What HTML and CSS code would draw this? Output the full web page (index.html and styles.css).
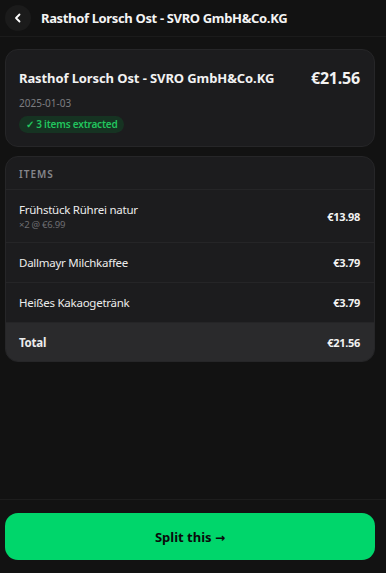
FILE: index.html
```html
<!DOCTYPE html>
<html lang="de">
<head>
  <meta charset="UTF-8">
  <meta name="viewport" content="width=device-width, initial-scale=1.0">
  <title>Receipt</title>
  <link rel="stylesheet" href="styles.css">
</head>
<body>
  <div class="app">
    <div class="topbar">
      <div class="back-btn">
        <svg width="12" height="12" viewBox="0 0 12 12"><path d="M7.5 2.5 L4 6 L7.5 9.5" fill="none" stroke="#fff" stroke-width="1.8" stroke-linecap="round" stroke-linejoin="round"/></svg>
      </div>
      <div class="topbar-title">Rasthof Lorsch Ost - SVRO GmbH&amp;Co.KG</div>
    </div>

    <div class="content">
      <div class="card summary">
        <div class="summary-head">
          <div class="merchant">Rasthof Lorsch Ost - SVRO GmbH&amp;Co.KG</div>
          <div class="amount">€21.56</div>
        </div>
        <div class="date">2025-01-03</div>
        <span class="badge">✓ 3 items extracted</span>
      </div>

      <div class="card items">
        <div class="items-label">ITEMS</div>
        <div class="row tall">
          <div>
            <div class="name">Frühstück Rührei natur</div>
            <div class="sub">×2 @ €6.99</div>
          </div>
          <div class="price">€13.98</div>
        </div>
        <div class="row">
          <div class="name">Dallmayr Milchkaffee</div>
          <div class="price">€3.79</div>
        </div>
        <div class="row">
          <div class="name">Heißes Kakaogetränk</div>
          <div class="price">€3.79</div>
        </div>
        <div class="row total">
          <div class="name">Total</div>
          <div class="price">€21.56</div>
        </div>
      </div>
    </div>

    <div class="footer">
      <button class="split-btn">Split this <span class="arrow">→</span></button>
    </div>
  </div>
</body>
</html>
```

FILE: styles.css
```css
* { box-sizing: border-box; }
body {
  margin: 0;
  background: #121212;
  color: #f2f2f2;
  font-family: "Noto Sans", "Open Sans", sans-serif;
}
.app {
  height: 573px;
  display: flex;
  flex-direction: column;
}
.topbar {
  height: 43px;
  display: flex;
  align-items: center;
  gap: 10px;
  padding: 0 5px;
  border-bottom: 1px solid #1b1b1b;
  margin-top: -6px;
  padding-top: 6px;
}
.back-btn {
  width: 26px;
  height: 26px;
  border-radius: 50%;
  background: #1b1b1b;
  display: flex;
  align-items: center;
  justify-content: center;
}
.topbar-title {
  font-size: 13px;
  font-weight: 700;
  letter-spacing: -0.35px;
  color: #f4f4f4;
}
.content {
  flex: 1;
  padding: 12px 11px 0 5px;
  display: flex;
  flex-direction: column;
  gap: 9px;
}
.card {
  background: #1c1c1e;
  border: 1px solid #262628;
  border-radius: 13px;
}
.summary {
  padding: 17px 14px 13px 13px;
}
.summary-head {
  display: flex;
  justify-content: space-between;
  align-items: center;
}
.merchant {
  font-size: 13px;
  font-weight: 700;
  letter-spacing: -0.1px;
}
.amount {
  font-size: 16px;
  font-weight: 700;
  letter-spacing: -0.2px;
}
.date {
  font-size: 10px;
  color: #7c7c80;
  margin-top: 7px;
}
.badge {
  display: inline-block;
  margin-top: 6px;
  padding: 1px 7px 2px;
  font-size: 10px;
  font-weight: 600;
  letter-spacing: -0.2px;
  color: #22c55e;
  background: #163322;
  border-radius: 9px;
}
.items { overflow: hidden; }
.items-label {
  font-size: 10px;
  font-weight: 600;
  letter-spacing: 1px;
  color: #86868b;
  padding: 10px 13px 8px;
  border-bottom: 1px solid #252527;
}
.row {
  display: flex;
  justify-content: space-between;
  align-items: center;
  height: 40px;
  padding: 0 14px 0 13px;
  border-bottom: 1px solid #252527;
  font-size: 11.5px;
  letter-spacing: -0.25px;
}
.row.tall { height: 53px; }
.row:last-child { border-bottom: none; }
.name { color: #ececec; }
.sub {
  font-size: 9.5px;
  color: #6e6e72;
  margin-top: 1px;
}
.price {
  font-weight: 700;
  font-size: 11px;
  letter-spacing: -0.3px;
}
.row.total {
  background: #2a2a2c;
  height: 38px;
}
.total .name { font-weight: 700; }
.footer {
  border-top: 1px solid #1d1d1d;
  padding: 13px 11px 13px 5px;
}
.split-btn {
  width: 100%;
  height: 47px;
  border: none;
  border-radius: 13px;
  background: #00d66b;
  color: #0b0b0b;
  font-family: inherit;
  font-size: 13px;
  font-weight: 700;
}
.arrow {
  font-family: "DejaVu Sans", sans-serif;
  font-size: 12px;
}
```
